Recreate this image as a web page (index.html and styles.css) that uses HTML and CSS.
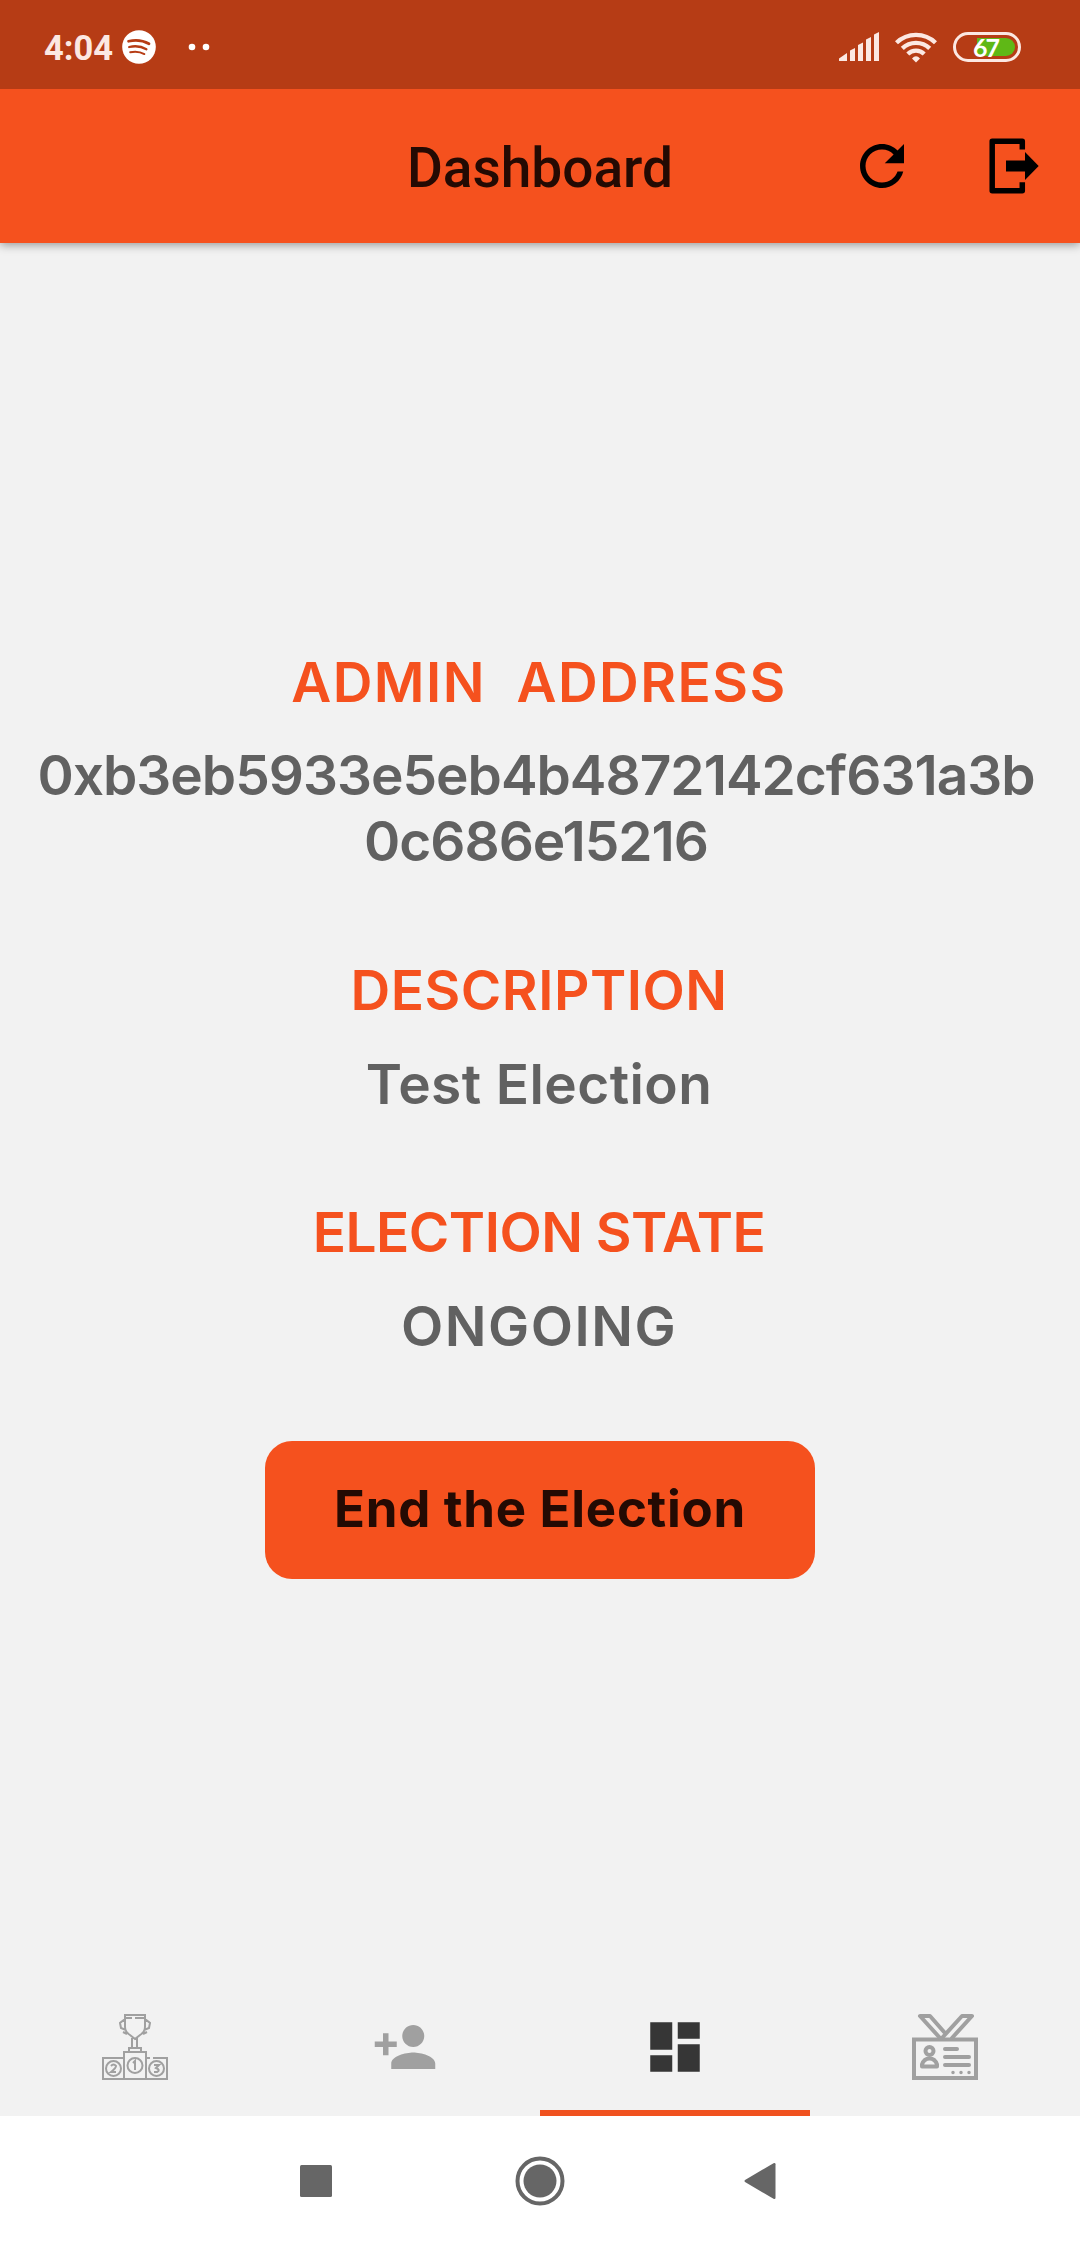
FILE: index.html
```html
<!DOCTYPE html>
<html lang="en">
<head>
<meta charset="utf-8">
<title>Dashboard</title>
<link rel="stylesheet" href="styles.css">
</head>
<body>
<div class="screen">
  <header class="status-bar">
    <div class="status-left">
      <span class="clock">4:04</span>
      <svg class="spotify" viewBox="0 0 34 34"><circle cx="17" cy="17" r="16.8" fill="#fff"/><g fill="none" stroke="#b63c15" stroke-linecap="round"><path d="M6.500 11.300c7-1.600 14.300-1 20.500 2.500" stroke-width="2.700"/><path d="M7.200 17c6-1.400 12-.8 17.200 2.200" stroke-width="2.300"/><path d="M8.200 22.200c5-1 10-.6 14.200 1.900" stroke-width="1.900"/></g></svg>
      <svg class="more-dots" viewBox="0 0 22 8"><circle cx="4" cy="4" r="3.300"/><circle cx="18" cy="4" r="3.300"/></svg>
    </div>
    <div class="status-right">
      <svg class="signal" viewBox="0 0 40 30"><path d="M0 29v-2.500L8 21v8zM11 29V18.500l5-2.500v13zM19 29V13l5-2.500V29zM27 29V7.500L32 5v24zM35 29V2.500L40 0v29z"/></svg>
      <svg class="wifi" viewBox="0 0 42 30"><g fill="none" stroke="#fce8e2" stroke-width="4.300"><path d="M1.500 10.700a28 28 0 0 1 39 0"/><path d="M7.300 16.400a19.600 19.600 0 0 1 27.400 0"/><path d="M12.800 22a11.700 11.700 0 0 1 16.400 0"/></g><path d="M17 26.500q4-4.500 8 0l-4 4z" fill="#fce8e2"/></svg>
      <div class="battery"><div class="battery-level"></div><span class="battery-text">67</span></div>
    </div>
  </header>

  <div class="app-bar">
    <h1 class="title">Dashboard</h1>
    <div class="actions">
      <svg class="icon" viewBox="0 0 24 24"><path d="M17.650 6.350C16.200 4.900 14.210 4 12 4c-4.420 0-7.990 3.580-7.990 8s3.570 8 7.990 8c3.730 0 6.840-2.550 7.730-6h-2.080c-.82 2.330-3.040 4-5.650 4-3.310 0-6-2.690-6-6s2.690-6 6-6c1.660 0 3.140.69 4.220 1.780L13 11h7V4l-2.350 2.350z"/></svg>
      <svg class="icon" viewBox="0 0 66 66"><path d="M41.300 16.500V8.200H11.200V57.800H41.300V49.300" fill="none" stroke="#000" stroke-width="5.500" stroke-linejoin="round"/><path d="M25 27.500h19V19l13.700 14L44 47v-8.500H25z"/></svg>
    </div>
  </div>

  <main class="content">
    <h2 class="label ls-address-label">ADMIN&nbsp; ADDRESS</h2>
    <p class="value address">0xb3eb5933e5eb4b4872142cf631a3b<br>0c686e15216</p>
    <h2 class="label ls-description">DESCRIPTION</h2>
    <p class="value ls-election">Test Election</p>
    <h2 class="label ls-state-label">ELECTION STATE</h2>
    <p class="value ls-state">ONGOING</p>
    <button class="end-button">End the Election</button>
  </main>

  <nav class="tabs">
    <div class="tab">
      <svg class="icon" viewBox="0 0 66 66" fill="none" stroke="#a0a0a0" stroke-width="2"><path d="M23 1h20v12q0 5-5 8l-5 4-5-4q-5-3-5-8zM23 4h7M33 4h10M23 5l-5 4 1 5 5 2M43 5l5 4-1 5-5 2M21 18l4 2M45 18l-4 2M30 24v9M35 24v9M27 38v-4h12v4M22 65V38h22v27M22 44H1v21h64V44H51M44 44h4"/><circle cx="11.500" cy="54.500" r="7.500"/><circle cx="33" cy="51.500" r="7.500"/><circle cx="54.500" cy="54.500" r="7.500"/><path d="M31 49l2-2v9M9 52q2.500-3 5 0 0 2-5 6h5M52 51h5l-3 3q5 2 1 4h-3"/></svg>
    </div>
    <div class="tab">
      <svg class="icon muted" viewBox="0 0 24 24"><path d="M15 12c2.210 0 4-1.790 4-4s-1.790-4-4-4-4 1.790-4 4 1.790 4 4 4zm-9-2V7H4v3H1v2h3v3h2v-3h3v-2H6zm9 4c-2.670 0-8 1.340-8 4v2h16v-2c0-2.660-5.330-4-8-4z"/></svg>
    </div>
    <div class="tab active">
      <svg class="icon dark" viewBox="0 0 24 24"><path d="M3 13h8V3H3v10zm0 8h8v-6H3v6zm10 0h8V11h-8v10zm0-18v6h8V3h-8z"/></svg>
    </div>
    <div class="tab">
      <svg class="icon" viewBox="0 0 66 66" fill="none" stroke="#a0a0a0" stroke-width="4" stroke-linejoin="round" stroke-linecap="round"><path d="M2 25.500h62V64H2z" stroke-linejoin="miter"/><path d="M28 24L8 2h10l15 17M40 24L60 2H50L30 24M33 35h12M33 43h24M33 51h24"/><circle cx="17.500" cy="37" r="4"/><path d="M10 52.500v-2q2-6 7.500-6t7.500 6v2z"/><path d="M41 58.500h0M49 58.500h0M57 58.500h0" stroke-width="3.500"/></svg>
    </div>
  </nav>

  <footer class="system-nav">
    <svg class="nav-icon" viewBox="0 0 50 50"><rect x="9" y="9" width="32" height="32" rx="1.500"/></svg>
    <svg class="nav-icon" viewBox="0 0 50 50"><circle cx="25" cy="25" r="22.500" fill="none" stroke="#666" stroke-width="4"/><circle cx="25" cy="25" r="16.500"/></svg>
    <svg class="nav-icon" viewBox="0 0 50 50"><path d="M6 24q-1 1 0 2L34.500 42.700q2 .8 2-1V8.300q0-1.800-2-1z"/></svg>
  </footer>
</div>
</body>
</html>
```
FILE: styles.css
```css
* { box-sizing: border-box; }
body { margin: 0; }
.screen {
  width: 1080px;
  height: 2246px;
  display: flex;
  flex-direction: column;
  background: #f2f2f2;
  font-family: Inter, "Liberation Sans", sans-serif;
  overflow: hidden;
}
.status-bar {
  position: relative;
  z-index: 1;
  height: 89px;
  flex: none;
  display: flex;
  justify-content: space-between;
  align-items: center;
  padding: 5px 59px 0 44px;
  background: #b63c15;
}
.status-left, .status-right { display: flex; align-items: center; }
.clock {
  font: 700 34.500px/40px Roboto, sans-serif;
  color: #fce8e2;
  width: 78px;
  padding-top: 2px;
  white-space: nowrap;
}
.spotify { width: 34px; height: 34px; }
.more-dots { width: 22px; height: 8px; margin-left: 32px; fill: #fff; }
.signal { width: 40px; height: 30px; fill: #fce8e2; }
.wifi { width: 42px; height: 30px; margin: 0 16px; overflow: visible; }
.battery {
  position: relative;
  width: 68px;
  height: 30px;
  border: 3px solid #fce8e2;
  border-radius: 15px;
  padding: 3px;
  display: flex;
  justify-content: flex-end;
}
.battery-level { width: 38px; height: 18px; border-radius: 0 9px 9px 0; background: #5fb816; }
.battery-text {
  position: absolute;
  inset: 0;
  padding-right: 3px;
  font: 700 25px/24px Lato, sans-serif;
  letter-spacing: -2px;
  text-align: center;
  color: #fff;
}
.app-bar {
  height: 154px;
  flex: none;
  display: grid;
  grid-template-columns: 1fr auto 1fr;
  align-items: center;
  padding: 0 33px;
  background: #f5511e;
  box-shadow: 0 2px 9px rgba(0, 0, 0, .38);
}
.title {
  grid-column: 2;
  margin: 0;
  padding-top: 3px;
  font: 500 55px/66px Roboto, sans-serif;
  color: #240a03;
}
.actions { display: flex; justify-content: flex-end; gap: 66px; }
.icon { display: block; width: 66px; height: 66px; }
.content {
  flex: 1;
  min-height: 0;
  padding-top: 406px;
  text-align: center;
}
.label, .value {
  margin: 0;
  padding-right: 2px;
  font-size: 55px;
  font-weight: 600;
  line-height: 66px;
  white-space: nowrap;
}
.label { color: #f5511e; }
.value { color: #616161; margin: 27.500px 0 82.500px; }
.value.address { margin: 27px 0 83px; padding-right: 8px; letter-spacing: -1px; }
.ls-address-label { letter-spacing: 1.450px; }
.ls-description { letter-spacing: .5px; }
.ls-election { letter-spacing: .4px; }
.ls-state-label { letter-spacing: -.5px; }
.ls-state { letter-spacing: 1.500px; }
.end-button {
  display: block;
  width: 550px;
  height: 138px;
  margin: 0 auto;
  padding: 0 0 2px;
  border: 0;
  border-radius: 27px;
  background: #f5511e;
  color: #240a03;
  font: 700 51px/60px Inter, sans-serif;
  letter-spacing: .7px;
}
.tabs { height: 138px; flex: none; display: grid; grid-template-columns: repeat(4, 1fr); }
.tab { display: flex; justify-content: center; align-items: center; border-bottom: 6px solid transparent; padding-top: 6px; }
.tab.active { border-color: #f0521f; }
.muted { fill: #a0a0a0; }
.dark { fill: #363636; }
.system-nav {
  height: 130px;
  flex: none;
  display: flex;
  justify-content: center;
  align-items: center;
  gap: 174px;
  background: #fff;
}
.nav-icon { width: 50px; height: 50px; fill: #666; }
```
